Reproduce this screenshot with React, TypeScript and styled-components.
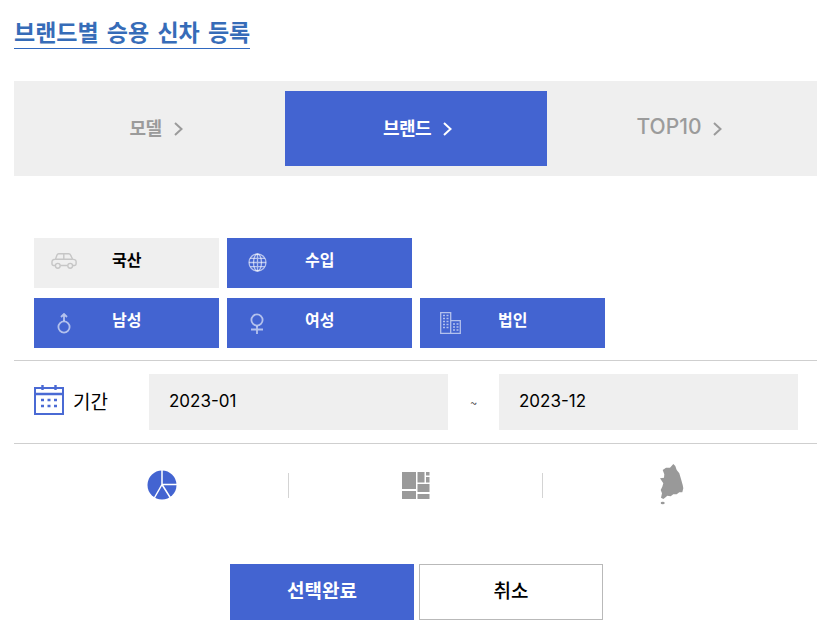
import React from "react";
import styled, { createGlobalStyle } from "styled-components";

const KR = `"Noto Sans CJK KR", "Noto Sans", sans-serif`;
const LATIN = `Inter, "Noto Sans CJK KR", sans-serif`;

const Global = createGlobalStyle`
  html, body { margin: 0; padding: 0; background: #fff; }
  * { box-sizing: border-box; }
  body { font-family: ${KR}; }
`;

const Page = styled.div`
  width: 827px;
  height: 636px;
  padding: 15px 10px 0 14px;
  overflow: hidden;
`;

const Title = styled.h2`
  display: table;
  margin: 0 0 32px;
  line-height: 33px;
  font-size: 23px;
  font-weight: 700;
  word-spacing: 3px;
  color: #366cb8;
  border-bottom: 1px solid #2f68c0;
  font-family: ${KR};
`;

const TabBar = styled.div`
  display: grid;
  grid-template-columns: 261px 262px 262px;
  height: 95px;
  padding: 10px;
  background: #efefef;
`;

const Tab = styled.div<{ $active?: boolean }>`
  display: flex;
  align-items: center;
  justify-content: center;
  gap: 12px;
  padding: 0 0 4px 3px;
  background: ${(p) => (p.$active ? "#4364d1" : "transparent")};
  color: ${(p) => (p.$active ? "#fff" : "#9b9b9b")};
  font-size: 18px;
  font-weight: 700;
  letter-spacing: -0.5px;
`;

const TabLatin = styled.span`
  font-family: ${LATIN};
  font-size: 21px;
  font-weight: 500;
  letter-spacing: 0;
`;

const Filters = styled.div`
  display: flex;
  flex-direction: column;
  gap: 10px;
  margin-top: 62px;
  padding-left: 20px;
`;

const FilterRow = styled.div`
  display: flex;
  gap: 8px;
`;

const Filter = styled.div<{ $on?: boolean }>`
  display: flex;
  align-items: center;
  width: 185px;
  height: 50px;
  background: ${(p) => (p.$on ? "#4364d1" : "#efefef")};
  color: ${(p) => (p.$on ? "#fff" : "#000")};
  font-size: 16px;
  font-weight: 700;
`;

const IconSlot = styled.span`
  display: flex;
  align-items: center;
  justify-content: center;
  width: 60px;
  margin-right: 18px;
`;

const FilterLabel = styled.span`
  position: relative;
  top: -4px;
`;

const PeriodRow = styled.div`
  display: flex;
  align-items: center;
  margin-top: 12px;
  height: 84px;
  padding: 0 0 0 20px;
  border-top: 1px solid #cfcfcf;
  border-bottom: 1px solid #cfcfcf;
`;

const PeriodIcon = styled.svg`
  flex: none;
  margin-top: -5px;
`;

const PeriodLabel = styled.span`
  flex: none;
  margin: -4px 0 0 9px;
  width: 76px;
  font-size: 19px;
  font-weight: 400;
  color: #000;
`;

const DateBox = styled.div`
  flex: none;
  display: flex;
  align-items: center;
  width: 299px;
  height: 56px;
  padding: 0 0 3px 20px;
  background: #efefef;
  font-family: ${LATIN};
  font-size: 17px;
  color: #000;
`;

const Tilde = styled.span`
  flex: none;
  width: 51px;
  text-align: center;
  font-size: 12px;
  color: #333;
`;

const ViewRow = styled.div`
  display: grid;
  grid-template-columns: repeat(3, 254px);
  margin-top: 20px;
  padding-left: 21px;
  height: 42px;
`;

const ViewCell = styled.div<{ $sep?: boolean; $top: number }>`
  display: flex;
  align-items: flex-start;
  justify-content: center;
  position: relative;
  padding-top: ${(p) => p.$top}px;
  &::after {
    content: "";
    display: ${(p) => (p.$sep ? "block" : "none")};
    position: absolute;
    right: 0;
    top: 9px;
    width: 1px;
    height: 25px;
    background: #d4d4d4;
  }
`;

const Actions = styled.div`
  display: flex;
  gap: 5px;
  margin-top: 58px;
  padding-left: 216px;
`;

const ActionButton = styled.button<{ $primary?: boolean }>`
  width: 184px;
  height: 56px;
  padding: 0 0 5px;
  border: ${(p) => (p.$primary ? "none" : "1px solid #b9b9b9")};
  background: ${(p) => (p.$primary ? "#4364d1" : "#fff")};
  color: ${(p) => (p.$primary ? "#fff" : "#000")};
  font-family: ${KR};
  font-size: 19px;
  font-weight: ${(p) => (p.$primary ? 700 : 500)};
`;

const Chevron = () => (
  <svg width="9" height="14" viewBox="0 0 9 14" fill="none" stroke="currentColor" strokeWidth="2" style={{ marginTop: 4 }}>
    <path d="M1 1l6.500 6L1 13" />
  </svg>
);

const ICON = "rgba(255,255,255,.6)";

const CarIcon = () => (
  <svg width="26" height="16" viewBox="0 0 26 16" fill="none" stroke="#c6c6c6" strokeWidth="1.400" style={{ marginTop: -4 }}>
    <path d="M4 12.500H2.500c-.8 0-1.500-.6-1.500-1.400V8.500c0-1 .7-1.800 1.800-2l1.700-.3L6 2c.3-.7.9-1.200 1.700-1.200h10.100c.8 0 1.400.4 1.700 1.100L21.600 6.200l1.900.4c1 .2 1.600 1 1.600 1.900v2.600c0 .8-.7 1.400-1.500 1.400H22" />
    <path d="M9.500 12.500h7M4.500 6.200h17M12.800 1v5.200" />
    <circle cx="6.800" cy="12.800" r="2.400" />
    <circle cx="19.200" cy="12.800" r="2.400" />
  </svg>
);

const GlobeIcon = () => (
  <svg width="19" height="19" viewBox="0 0 19 19" fill="none" stroke={ICON} strokeWidth="1.300" style={{ marginTop: -2 }}>
    <circle cx="9.500" cy="9.500" r="8.500" />
    <ellipse cx="9.500" cy="9.500" rx="4" ry="8.500" />
    <path d="M9.500 1v17M1 9.500h17M2.200 5.300h14.600M2.200 13.700h14.600" />
  </svg>
);

const MaleIcon = () => (
  <svg width="14" height="21" viewBox="0 0 14 21" fill="none" stroke={ICON} strokeWidth="1.800">
    <circle cx="7" cy="14" r="5.600" />
    <path d="M7 8V1M4 4l3-3 3 3" />
  </svg>
);

const FemaleIcon = () => (
  <svg width="14" height="21" viewBox="0 0 14 21" fill="none" stroke={ICON} strokeWidth="1.800">
    <circle cx="7" cy="7" r="5.600" />
    <path d="M7 13v8M1 16.500h12" />
  </svg>
);

const BuildingIcon = () => (
  <svg width="21" height="22" viewBox="0 0 21 22" fill="none" stroke={ICON}>
    <path d="M.7 21.300V.7h10v20.600zM10.700 8.700h9.600v12.600h-9.600z" strokeWidth="1.300" />
    <path d="M3 3.500h2M6.500 3.500h2M3 6.500h2M6.500 6.500h2M3 9.500h2M6.500 9.500h2M3 12.500h2M6.500 12.500h2M3 15.500h2M6.500 15.500h2M13 12h2M16.500 12h2M13 15h2M16.500 15h2M13 18h2M16.500 18h2" strokeWidth="1.300" />
  </svg>
);

const CalendarIcon = () => (
  <PeriodIcon width="30" height="30" viewBox="0 0 30 30" fill="none" stroke="#4a6ad4" strokeWidth="2">
    <rect x="1" y="3" width="28" height="26" />
    <path d="M1 9h28M8.500 0v5M21.500 0v5" strokeWidth="2.400" />
    <path d="M7 15h3M13.500 15h3M20 15h3M7 21h3M13.500 21h3M20 21h3" strokeWidth="2.400" />
  </PeriodIcon>
);

const PieIcon = () => (
  <svg width="30" height="32" viewBox="0 0 30 32" fill="#4364d1" stroke="#fff" strokeWidth="1.500">
    <circle cx="15" cy="16" r="14.500" stroke="none" />
    <path d="M15 1v14.500H30M15 15.500L7 29.500M15 15.500L23.500 29" fill="none" />
  </svg>
);

const TreemapIcon = () => (
  <svg width="28" height="28" viewBox="0 0 28 28" fill="#9a9a9a">
    <rect x="0" y="0" width="14" height="17" />
    <rect x="0" y="19" width="14" height="8" />
    <rect x="15.500" y="0" width="7" height="10.500" />
    <rect x="24" y="0" width="3.500" height="3.500" />
    <rect x="24" y="5" width="3.500" height="5.500" />
    <rect x="15.500" y="12" width="12" height="8" />
    <rect x="15.500" y="22" width="12" height="5" />
  </svg>
);

const KoreaIcon = () => (
  <svg width="30" height="43" viewBox="-5 0 30 43" fill="#999">
    <path d="M13.300 0L15.300 2 16.700 6 19.300 9.300 21 15 22.700 21 23.300 24.300 22.300 28.300 19.300 28.300 16.700 30.300 13.300 30.300 10.700 32.300 7.300 31.700 5 33.700 3.300 35 1 33.700 2 29.300 .7 26 2.300 22.700 3.300 19.300 0 14.300 4 13.700 4.300 10.300 2.700 6 6 3.700 10 3.700z" />
    <ellipse cx="2.700" cy="39" rx="2" ry="1.300" />
  </svg>
);

export default function App() {
  return (
    <Page>
      <Global />
      <Title>브랜드별 승용 신차 등록</Title>
      <TabBar>
        <Tab>모델 <Chevron /></Tab>
        <Tab $active>브랜드 <Chevron /></Tab>
        <Tab><TabLatin>TOP10</TabLatin> <Chevron /></Tab>
      </TabBar>
      <Filters>
        <FilterRow>
          <Filter><IconSlot><CarIcon /></IconSlot><FilterLabel>국산</FilterLabel></Filter>
          <Filter $on><IconSlot><GlobeIcon /></IconSlot><FilterLabel>수입</FilterLabel></Filter>
        </FilterRow>
        <FilterRow>
          <Filter $on><IconSlot><MaleIcon /></IconSlot><FilterLabel>남성</FilterLabel></Filter>
          <Filter $on><IconSlot><FemaleIcon /></IconSlot><FilterLabel>여성</FilterLabel></Filter>
          <Filter $on><IconSlot><BuildingIcon /></IconSlot><FilterLabel>법인</FilterLabel></Filter>
        </FilterRow>
      </Filters>
      <PeriodRow>
        <CalendarIcon />
        <PeriodLabel>기간</PeriodLabel>
        <DateBox>2023-01</DateBox>
        <Tilde>~</Tilde>
        <DateBox>2023-12</DateBox>
      </PeriodRow>
      <ViewRow>
        <ViewCell $sep $top={5}><PieIcon /></ViewCell>
        <ViewCell $sep $top={8}><TreemapIcon /></ViewCell>
        <ViewCell $top={0}><KoreaIcon /></ViewCell>
      </ViewRow>
      <Actions>
        <ActionButton $primary>선택완료</ActionButton>
        <ActionButton>취소</ActionButton>
      </Actions>
    </Page>
  );
}
